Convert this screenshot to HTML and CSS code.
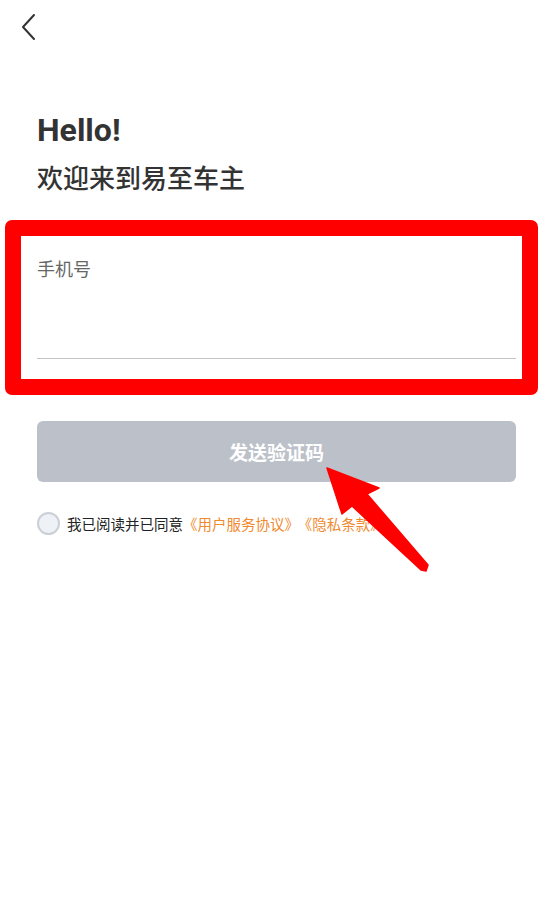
FILE: index.html
```html
<!DOCTYPE html>
<html lang="zh">
<head>
<meta charset="utf-8">
<link rel="stylesheet" href="styles.css">
</head>
<body>
<div class="page">
  <div class="nav">
    <svg class="back" width="16" height="28" viewBox="0 0 16 28"><path d="M13 2 L2 14 L13 26" fill="none" stroke="#333" stroke-width="2" stroke-linecap="round" stroke-linejoin="round"/></svg>
  </div>
  <div class="content">
    <h1 class="hello">Hello!</h1>
    <h2 class="welcome">欢迎来到易至车主</h2>
    <div class="field">
      <div class="label">手机号</div>
      <div class="underline"></div>
    </div>
    <button class="send">发送验证码</button>
    <div class="agree">
      <span class="radio"></span>
      <span class="agree-text">我已阅读并已同意<span class="link">《用户服务协议》</span><span class="link gap">《隐私条款》</span></span>
    </div>
  </div>
  <div class="mark-box"></div>
  <svg class="mark-arrow" width="554" height="916" viewBox="0 0 554 916"><polygon points="327,468 379,488 367,494 428,565 426,571 421,570 352,506 342,514" fill="#ff0000" stroke="#ff0000" stroke-width="1.5" stroke-linejoin="round"/></svg>
</div>
</body>
</html>
```
FILE: styles.css
```css
* { box-sizing: border-box; }
html, body { margin: 0; padding: 0; background: #fff; }
body { font-family: "Noto Sans", Roboto, "Noto Sans CJK SC", sans-serif; color: #333; }
.page { position: relative; width: 554px; height: 916px; overflow: hidden; }
.nav { height: 54px; padding: 13px 0 0 21px; }
.back { display: block; }
.content { padding: 0 38px 0 37px; }
.hello { margin: 54px 0 0; font-family: Roboto, "Noto Sans", sans-serif; font-size: 32px; font-weight: 700; line-height: 44px; color: #333; }
.welcome { margin: 5px 0 0; font-family: "Noto Sans CJK SC", sans-serif; font-size: 26px; font-weight: 500; line-height: 40px; color: #333; }
.field { margin-top: 58px; }
.label { font-family: "Noto Sans CJK SC", sans-serif; font-size: 18px; line-height: 26px; color: #666; }
.underline { margin-top: 77px; height: 1px; background: #c4c4c4; }
.send { display: block; width: 100%; height: 61px; margin-top: 62px; border: none; border-radius: 6px; background: #bcc1c9; color: #fff; font-family: "Noto Sans CJK SC", sans-serif; font-size: 19px; font-weight: 700; }
.agree { display: flex; align-items: center; margin-top: 30px; }
.radio { width: 23px; height: 23px; border-radius: 50%; border: 2px solid #cbd0d6; background: #eef2f7; flex: none; }
.agree-text { margin-left: 7px; font-family: "Noto Sans CJK SC", sans-serif; font-size: 14.5px; line-height: 20px; color: #222; white-space: nowrap; }
.link { color: #f08a30; }
.gap { margin-left: 6px; }
.mark-box { position: absolute; left: 5px; top: 220px; width: 533px; height: 175px; border: 16px solid #ff0000; border-radius: 7px; }
.mark-arrow { position: absolute; left: 0; top: 0; }
```
